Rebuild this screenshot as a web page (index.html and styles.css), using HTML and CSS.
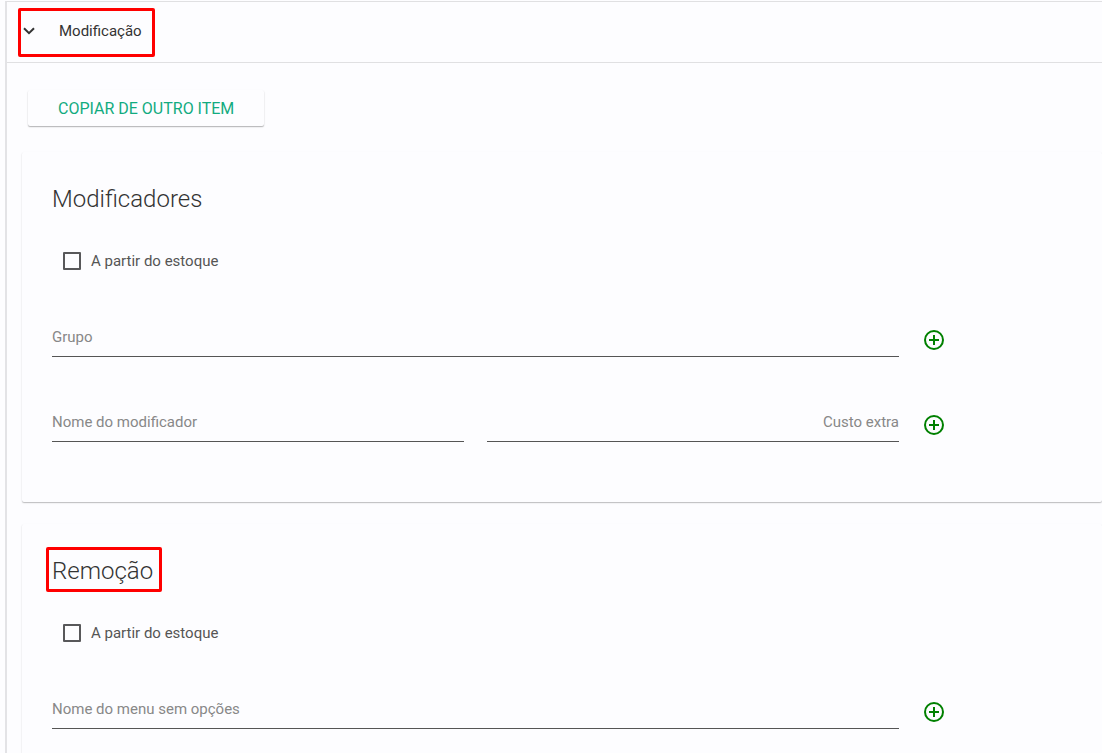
FILE: index.html
```html
<!DOCTYPE html>
<html lang="pt-BR">
<head>
  <meta charset="utf-8">
  <meta name="viewport" content="width=device-width, initial-scale=1">
  <title>Modificação</title>
  <link rel="stylesheet" href="styles.css">
</head>
<body>
  <main class="panel">
    <header class="panel-header">
      <button class="panel-toggle" type="button" aria-expanded="true">
        <svg class="chevron" viewBox="0 0 12 8" aria-hidden="true"><path d="M1 1.2 L6 6.2 L11 1.2"/></svg>
        <span class="toggle-label">Modificação</span>
      </button>
    </header>
    <div class="panel-body">
      <button class="copy-button" type="button">Copiar de outro item</button>

      <section class="card">
        <h2 class="card-title">Modificadores</h2>
        <label class="check"><input class="check-box" type="checkbox">A partir do estoque</label>
        <div class="row">
          <input class="field" type="text" placeholder="Grupo" aria-label="Grupo">
          <button class="add" type="button" aria-label="Adicionar grupo">
            <svg class="add-icon" viewBox="0 0 24 24" aria-hidden="true"><circle cx="12" cy="12" r="9"/><path d="M12 7v10M7 12h10"/></svg>
          </button>
        </div>
        <div class="row">
          <input class="field" type="text" placeholder="Nome do modificador" aria-label="Nome do modificador">
          <input class="field field-end" type="text" placeholder="Custo extra" aria-label="Custo extra">
          <button class="add" type="button" aria-label="Adicionar modificador">
            <svg class="add-icon" viewBox="0 0 24 24" aria-hidden="true"><circle cx="12" cy="12" r="9"/><path d="M12 7v10M7 12h10"/></svg>
          </button>
        </div>
      </section>

      <section class="card">
        <h2 class="card-title"><span class="marked">Remoção</span></h2>
        <label class="check"><input class="check-box" type="checkbox">A partir do estoque</label>
        <div class="row">
          <input class="field" type="text" placeholder="Nome do menu sem opções" aria-label="Nome do menu sem opções">
          <button class="add" type="button" aria-label="Adicionar menu">
            <svg class="add-icon" viewBox="0 0 24 24" aria-hidden="true"><circle cx="12" cy="12" r="9"/><path d="M12 7v10M7 12h10"/></svg>
          </button>
        </div>
      </section>
    </div>
  </main>
</body>
</html>
```

FILE: styles.css
```css
* {
  box-sizing: border-box;
}

body {
  margin: 0;
  padding: 1px 0 0 5px;
  height: 100vh;
  overflow: hidden;
  background: #fdfdff;
  color: #333;
  font-family: Roboto, "Liberation Sans", sans-serif;
  font-size: 15px;
}

button,
input {
  font: inherit;
}

.panel {
  border-top: 1px solid #e0e0e2;
  border-left: 2px solid #e3e3e6;
}

.panel-header {
  display: flex;
  height: 61px;
  padding: 6px 11px;
  border-bottom: 1px solid #e0e0e2;
}

.panel-toggle {
  display: flex;
  align-items: center;
  gap: 24px;
  height: 49px;
  padding: 0 10px 3px 2px;
  border: 3px solid #f00;
  border-radius: 2px;
  background: none;
  color: #333;
}

.chevron {
  width: 12px;
  height: 8px;
  fill: none;
  stroke: #333;
  stroke-width: 2;
}

.panel-body {
  padding: 27px 0 0 15px;
}

.copy-button {
  display: block;
  height: 36px;
  margin: 0 0 26px 6px;
  padding: 0 30px;
  border: 0;
  border-radius: 2px;
  background: #fdfdff;
  box-shadow: 0 1px 1px rgba(0, 0, 0, 0.2), 0 1px 2px rgba(0, 0, 0, 0.12);
  color: #12ab80;
  font-size: 16px;
  text-transform: uppercase;
}

.card {
  padding: 32px 156px 60px 30px;
  border-radius: 2px;
  background: #fdfdff;
  box-shadow: 0 1px 1px rgba(0, 0, 0, 0.18), 0 1px 2px rgba(0, 0, 0, 0.1);
}

.card + .card {
  margin-top: 22px;
}

.card-title {
  margin: 0 0 35px;
  font-size: 24px;
  font-weight: 300;
  line-height: 30px;
}

.marked {
  position: relative;
}

.marked::after {
  content: "";
  position: absolute;
  inset: -10px -9px -7px -6px;
  border: 3px solid #f00;
  border-radius: 2px;
}

.check {
  display: flex;
  align-items: center;
  gap: 10px;
  width: max-content;
  height: 24px;
  margin: 0 0 52px 11px;
  color: #555;
}

.check-box {
  appearance: none;
  width: 18px;
  height: 18px;
  margin: 0;
  border: 2px solid #58585a;
  border-radius: 1px;
}

.check-box:checked {
  background: #12ab80;
}

.row {
  display: flex;
  gap: 23px;
}

.row + .row {
  margin-top: 53px;
}

.field {
  flex: 1;
  min-width: 0;
  height: 32px;
  padding: 0 0 7px;
  border: 0;
  border-bottom: 1px solid #555;
  border-radius: 0;
  outline: 0;
  background: none;
  color: #333;
}

.field::placeholder {
  color: #888;
  opacity: 1;
}

.field-end {
  text-align: right;
}

.add {
  width: 24px;
  height: 30px;
  padding: 3px 0;
  border: 0;
  background: none;
}

.add-icon {
  display: block;
  width: 24px;
  height: 24px;
  fill: none;
  stroke: #008000;
  stroke-width: 2;
}
```
